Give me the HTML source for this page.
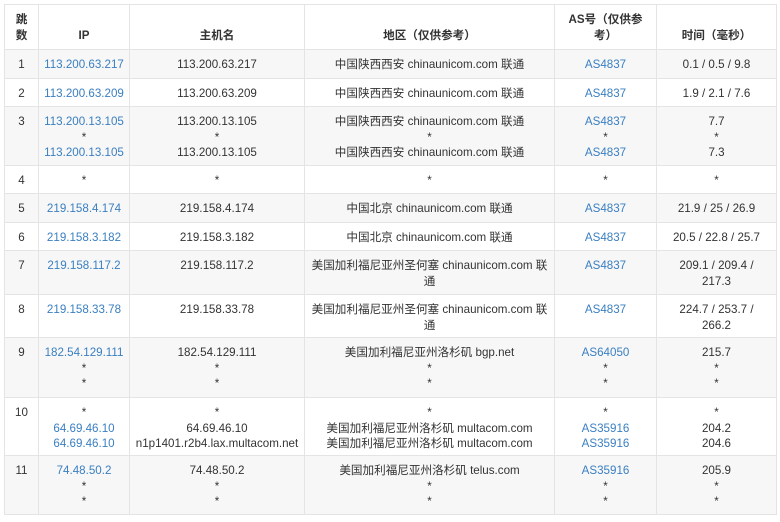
<!DOCTYPE html>
<html><head><meta charset="utf-8"><style>
body{margin:0;background:#fff;}
table{position:absolute;left:4px;top:4px;width:772px;border-collapse:collapse;table-layout:fixed;font-family:"Liberation Sans","Noto Sans CJK SC",sans-serif;font-size:11.6px;color:#333;}
td,th{border:1px solid #e4e4e4;text-align:center;vertical-align:top;padding:7px 4px 0;line-height:15.5px;overflow:hidden;white-space:nowrap;}
th{vertical-align:bottom;padding-bottom:6px;font-weight:bold;}
tr.g td{background:#f7f7f7;}
a{color:#3a7fc1;text-decoration:none;}
</style></head><body>
<table>
<colgroup><col style="width:34px"><col style="width:91px"><col style="width:175px"><col style="width:250px"><col style="width:102px"><col style="width:120px"></colgroup>
<tr style="height:44px"><th>跳<br>数</th><th>IP</th><th>主机名</th><th>地区（仅供参考）</th><th>AS号（仅供参<br>考）</th><th>时间（毫秒）</th></tr>
<tr class="g" style="height:29px"><td>1</td><td><a>113.200.63.217</a></td><td>113.200.63.217</td><td>中国陕西西安 chinaunicom.com 联通</td><td><a>AS4837</a></td><td>0.1 / 0.5 / 9.8</td></tr>
<tr style="height:28px"><td>2</td><td><a>113.200.63.209</a></td><td>113.200.63.209</td><td>中国陕西西安 chinaunicom.com 联通</td><td><a>AS4837</a></td><td>1.9 / 2.1 / 7.6</td></tr>
<tr class="g" style="height:59px"><td>3</td><td><a>113.200.13.105</a><br>*<br><a>113.200.13.105</a></td><td>113.200.13.105<br>*<br>113.200.13.105</td><td>中国陕西西安 chinaunicom.com 联通<br>*<br>中国陕西西安 chinaunicom.com 联通</td><td><a>AS4837</a><br>*<br><a>AS4837</a></td><td>7.7<br>*<br>7.3</td></tr>
<tr style="height:28px"><td>4</td><td>*</td><td>*</td><td>*</td><td>*</td><td>*</td></tr>
<tr class="g" style="height:29px"><td>5</td><td><a>219.158.4.174</a></td><td>219.158.4.174</td><td>中国北京 chinaunicom.com 联通</td><td><a>AS4837</a></td><td>21.9 / 25 / 26.9</td></tr>
<tr style="height:28px"><td>6</td><td><a>219.158.3.182</a></td><td>219.158.3.182</td><td>中国北京 chinaunicom.com 联通</td><td><a>AS4837</a></td><td>20.5 / 22.8 / 25.7</td></tr>
<tr class="g" style="height:44px"><td>7</td><td><a>219.158.117.2</a></td><td>219.158.117.2</td><td>美国加利福尼亚州圣何塞 chinaunicom.com 联<br>通</td><td><a>AS4837</a></td><td>209.1 / 209.4 /<br>217.3</td></tr>
<tr style="height:43px"><td>8</td><td><a>219.158.33.78</a></td><td>219.158.33.78</td><td>美国加利福尼亚州圣何塞 chinaunicom.com 联<br>通</td><td><a>AS4837</a></td><td>224.7 / 253.7 /<br>266.2</td></tr>
<tr class="g" style="height:60px"><td>9</td><td><a>182.54.129.111</a><br>*<br>*</td><td>182.54.129.111<br>*<br>*</td><td>美国加利福尼亚州洛杉矶 bgp.net<br>*<br>*</td><td><a>AS64050</a><br>*<br>*</td><td>215.7<br>*<br>*</td></tr>
<tr style="height:58px"><td>10</td><td>*<br><a>64.69.46.10</a><br><a>64.69.46.10</a></td><td>*<br>64.69.46.10<br>n1p1401.r2b4.lax.multacom.net</td><td>*<br>美国加利福尼亚州洛杉矶 multacom.com<br>美国加利福尼亚州洛杉矶 multacom.com</td><td>*<br><a>AS35916</a><br><a>AS35916</a></td><td>*<br>204.2<br>204.6</td></tr>
<tr class="g" style="height:59px"><td>11</td><td><a>74.48.50.2</a><br>*<br>*</td><td>74.48.50.2<br>*<br>*</td><td>美国加利福尼亚州洛杉矶 telus.com<br>*<br>*</td><td><a>AS35916</a><br>*<br>*</td><td>205.9<br>*<br>*</td></tr>
</table>
</body></html>
